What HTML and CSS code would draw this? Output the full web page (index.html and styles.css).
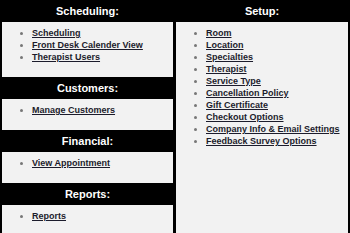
FILE: index.html
```html
<!DOCTYPE html>
<html lang="en">
<head>
  <meta charset="UTF-8">
  <title>Admin Menu</title>
  <link rel="stylesheet" href="styles.css">
</head>
<body>
  <div class="menu">
    <!-- left column -->
    <div class="col">
      <div class="section">
        <h2>Scheduling:</h2>
        <ul>
          <li><a href="#">Scheduling</a></li>
          <li><a href="#">Front Desk Calender View</a></li>
          <li><a href="#">Therapist Users</a></li>
        </ul>
      </div>
      <div class="section">
        <h2>Customers:</h2>
        <ul>
          <li><a href="#">Manage Customers</a></li>
        </ul>
      </div>
      <div class="section">
        <h2>Financial:</h2>
        <ul>
          <li><a href="#">View Appointment</a></li>
        </ul>
      </div>
      <div class="section last">
        <h2>Reports:</h2>
        <ul>
          <li><a href="#">Reports</a></li>
        </ul>
      </div>
    </div>

    <!-- right column -->
    <div class="col">
      <div class="section last">
        <h2>Setup:</h2>
        <ul>
          <li><a href="#">Room</a></li>
          <li><a href="#">Location</a></li>
          <li><a href="#">Specialties</a></li>
          <li><a href="#">Therapist</a></li>
          <li><a href="#">Service Type</a></li>
          <li><a href="#">Cancellation Policy</a></li>
          <li><a href="#">Gift Certificate</a></li>
          <li><a href="#">Checkout Options</a></li>
          <li><a href="#">Company Info &amp; Email Settings</a></li>
          <li><a href="#">Feedback Survey Options</a></li>
        </ul>
      </div>
    </div>
  </div>
</body>
</html>
```
FILE: styles.css
```css
html, body {
  margin: 0;
  height: 100%;
  background: #000;
}

.menu {
  display: grid;
  grid-template-columns: 171px 172px;
  gap: 3px;
  padding: 0 2px;
  min-height: 100%;
  font-family: "Liberation Sans", Arial, sans-serif;
}

.col {
  display: flex;
  flex-direction: column;
}

.section {
  display: flex;
  flex-direction: column;
}
.section.last {
  flex: 1;
}

h2 {
  margin: 0;
  height: 22px;
  line-height: 22px;
  background: #000;
  color: #fff;
  font-size: 11px;
  font-weight: bold;
  text-align: center;
}

ul {
  margin: 0;
  padding: 5px 0 14px 30px;
  background: #f2f2f2;
  flex: 1;
  list-style: disc;
}

li {
  font-size: 9px;
  line-height: 12px;
  font-weight: bold;
}
li::marker {
  color: #777;
}

a {
  color: #1c1c2c;
  text-decoration: underline;
}
```
